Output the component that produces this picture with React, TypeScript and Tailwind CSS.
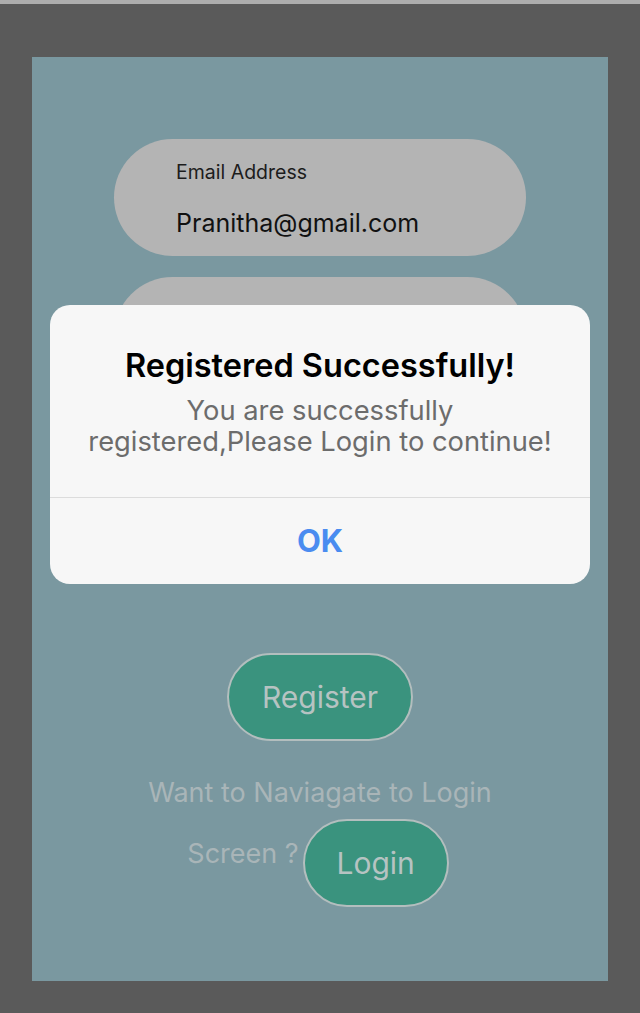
import { Fragment } from 'react'

export default function App() {
  return (
    <div className="min-h-screen bg-[#5a5a5a] font-['Inter',sans-serif]">
      <div className="h-[4px] bg-[#adadad]" />

      <div className="relative mx-[32px] mt-[53px] flex h-[924px] flex-col items-center bg-[#7a98a0] pt-[82px]">
        <div className="flex h-[117px] w-[412px] flex-col gap-[22px] rounded-full bg-[#b4b4b4] pl-[62px] pt-[21px]">
          <span className="text-[19.5px] leading-[25px] text-[#1c1c1c]">Email Address</span>
          <span className="text-[25px] leading-[33px] text-[#111]">Pranitha@gmail.com</span>
        </div>
        <div className="mt-[21px] h-[117px] w-[412px] rounded-full bg-[#b4b4b4]" />

        <button className="mt-[259px] flex h-[88px] w-[186px] items-center justify-center rounded-full border-2 border-[#b3bebe] bg-[#3a937e] text-[30px] text-[#b6c3c2]">
          Register
        </button>

        <p className="mt-[34px] text-[27px] leading-[36px] text-[#a9b5b8]">Want to Naviagate to Login</p>
        <div className="mt-[8px] mr-[4px] flex items-start gap-[4px]">
          <span className="pt-[17px] text-[27px] leading-[36px] text-[#a9b5b8]">Screen ?</span>
          <button className="flex h-[88px] w-[146px] items-center justify-center rounded-full border-2 border-[#b3bebe] bg-[#3a937e] text-[30px] text-[#b6c3c2]">
            Login
          </button>
        </div>

        {/* alert */}
        <div className="absolute left-[18px] top-[248px] w-[540px] overflow-hidden rounded-[20px] bg-[#f7f7f7]">
          <div className="flex h-[192px] flex-col items-center px-[16px] pt-[40px] text-center">
            <h2 className="text-[32.5px] font-semibold leading-[42px] text-black">Registered Successfully!</h2>
            <p className="mt-[8px] text-[27.3px] leading-[31px] text-[#6c6c6c]">
              {['You are successfully', 'registered,Please Login to continue!'].map((l, i) => (
                <Fragment key={i}>
                  {l}
                  <br />
                </Fragment>
              ))}
            </p>
          </div>
          <div className="h-px bg-[#dcdcdc]" />
          <button className="flex h-[86px] w-full items-center justify-center text-[31px] font-bold text-[#4a8cf0]">
            OK
          </button>
        </div>
      </div>
    </div>
  )
}
